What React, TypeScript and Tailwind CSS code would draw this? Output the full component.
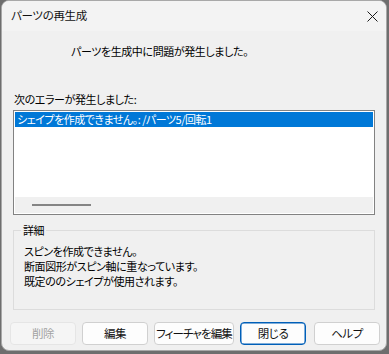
import React from "react";

const font = {
  fontFamily: '"Noto Sans CJK JP", "Noto Sans", sans-serif',
  fontFeatureSettings: '"palt" 1',
} as React.CSSProperties;

function Btn({
  label,
  w = "w-[66px]",
  disabled = false,
  primary = false,
  extra = "",
  track = "tracking-[-0.4px]",
}: {
  label: string;
  w?: string;
  disabled?: boolean;
  primary?: boolean;
  extra?: string;
  track?: string;
}) {
  const base = `${w} ${extra} ${track} shrink-0 h-[23px] rounded-[4px] flex items-center justify-center text-[11.5px] leading-none whitespace-nowrap`;
  if (disabled)
    return (
      <div className={`${base} bg-[#f5f5f5] border border-[#e5e5e5] text-[#a2a2a2]`}>{label}</div>
    );
  if (primary)
    return (
      <div className={`${base} bg-[#fdfdfd] border border-[#005fb8] shadow-[inset_0_0_0_0.5px_#005fb8] text-[#111]`}>
        {label}
      </div>
    );
  return (
    <div className={`${base} bg-[#fdfdfd] border border-[#d0d0d0] text-[#111]`}>{label}</div>
  );
}

export default function App() {
  return (
    <div className="w-[389px] h-[354px] bg-[#6e6e6e] pl-[1px] overflow-hidden" style={font}>
      <div className="w-[386px] h-[351px] rounded-[8px] bg-[#f0f0f0] overflow-hidden flex flex-col border border-[#a8a8a8]">
        {/* title bar */}
        <div className="h-[30px] bg-[#f3f3f3] flex items-center justify-between pl-[9px] pr-[8px] shrink-0">
          <span className="text-[11.5px] tracking-[-0.3px] text-[#111]">パーツの再生成</span>
          <svg width="11" height="11" viewBox="0 0 11 11" className="mt-[1px]">
            <path d="M0.5 0.5 L10.5 10.5 M10.5 0.5 L0.5 10.5" stroke="#1a1a1a" strokeWidth="1" />
          </svg>
        </div>

        <div className="flex flex-col px-[11px] text-[11px] tracking-[-0.4px] text-[#000]">
          <div className="mt-[12px] h-[16px] leading-[16px] pl-[58px]">
            パーツを生成中に問題が発生しました。
          </div>
          <div className="mt-[32px] h-[16px] leading-[16px] pl-[1px]">
            次のエラーが発生しました:
          </div>

          {/* list box */}
          <div className="mt-[3px] h-[105px] border border-[#828282] bg-white flex flex-col p-[1px]">
            <div className="h-[15px] bg-[#0078d7] text-white leading-[15px] pl-[2px] whitespace-nowrap tracking-[-0.5px]">
              シェイプを作成できません。: /パーツ5/回転1
            </div>
            <div className="flex-1" />
            <div className="h-[16px] bg-[#f0f0f0] flex items-center pl-[17px]">
              <div className="w-[59px] h-[2px] bg-[#858585]" />
            </div>
          </div>

          {/* group box */}
          <div className="relative mt-[15px] h-[80px] border border-[#dcdcdc]">
            <div className="absolute left-[7px] top-[-9px] px-[2px] bg-[#f0f0f0] leading-[16px]">
              詳細
            </div>
            <div className="pt-[13px] pl-[10px] leading-[15px]">
              <div>スピンを作成できません。</div>
              <div>断面図形がスピン軸に重なっています。</div>
              <div>既定ののシェイプが使用されます。</div>
            </div>
          </div>

          {/* buttons */}
          <div className="mt-[12px] flex gap-[6px] -ml-[3px]">
            <Btn label="削除" disabled />
            <Btn label="編集" />
            <Btn label="フィーチャを編集" w="w-[80px]" track="tracking-[-0.9px]" />
            <Btn label="閉じる" primary />
            <Btn label="ヘルプ" extra="ml-[2px]" />
          </div>
        </div>
      </div>
    </div>
  );
}
